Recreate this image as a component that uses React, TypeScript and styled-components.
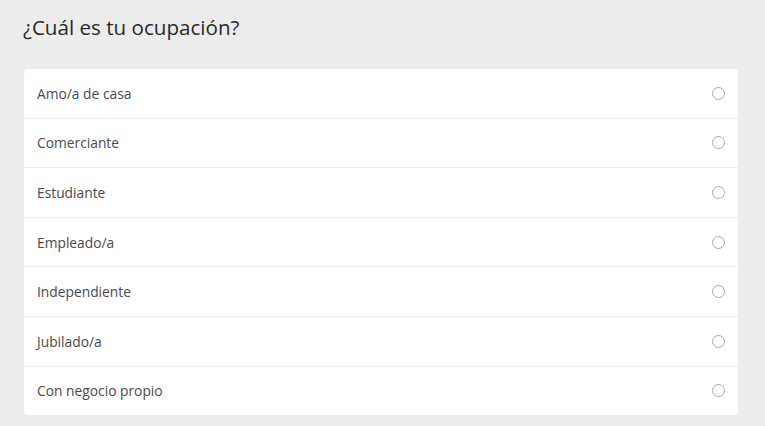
import styled, { createGlobalStyle } from "styled-components";

const GlobalStyle = createGlobalStyle`
  body {
    margin: 0;
    background: #ececec;
    font-family: "Open Sans", "Liberation Sans", sans-serif;
  }
`;

const options = [
  "Amo/a de casa",
  "Comerciante",
  "Estudiante",
  "Empleado/a",
  "Independiente",
  "Jubilado/a",
  "Con negocio propio",
];

export default function App() {
  return (
    <>
      <GlobalStyle />
      <Page>
        <Title>¿Cuál es tu ocupación?</Title>
        <Card>
          {options.map((label) => (
            <Row key={label}>
              <Label>{label}</Label>
              <Radio />
            </Row>
          ))}
        </Card>
      </Page>
    </>
  );
}

const Page = styled.div`
  display: flex;
  flex-direction: column;
  padding: 12px 27px 0 24px;
`;

const Title = styled.h1`
  margin: 0 0 27px -1px;
  height: 30px;
  line-height: 30px;
  font-size: 20.6px;
  font-weight: 400;
  color: #2a2a2a;
`;

const Card = styled.div`
  display: flex;
  flex-direction: column;
  background: #ffffff;
  border-radius: 4px;
`;

const Row = styled.div`
  display: flex;
  align-items: center;
  justify-content: space-between;
  height: 48.6px;
  padding: 0 13px 0 13px;

  & + & {
    border-top: 1px solid #eeeeee;
  }
`;

const Label = styled.span`
  font-size: 13.8px;
  color: #4a4a4a;
`;

const Radio = styled.span`
  width: 11px;
  height: 11px;
  border: 1.6px solid #a8a8a8;
  border-radius: 50%;
`;
